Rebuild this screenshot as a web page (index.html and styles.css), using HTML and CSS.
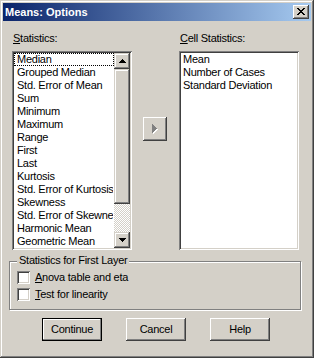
FILE: index.html
```html
<!DOCTYPE html>
<html lang="en">
<head>
    <meta charset="UTF-8">
    <meta name="viewport" content="width=device-width, initial-scale=1.0">
    <title>Means: Options</title>
    <link rel="stylesheet" href="styles.css">
</head>
<body>
    <div class="dialog">
        <div class="titlebar">
            <span class="title">Means: Options</span>
            <div class="close-btn">
                <svg width="8" height="7" viewBox="0 0 8 7" shape-rendering="crispEdges">
                    <path fill="#000" d="M0 0h2v1H0zM6 0h2v1H6zM1 1h2v1H1zM5 1h2v1H5zM2 2h4v1H2zM3 3h2v1H3zM2 4h4v1H2zM1 5h2v1H1zM5 5h2v1H5zM0 6h2v1H0zM6 6h2v1H6z"/>
                </svg>
            </div>
        </div>

        <div class="dialog-body">
            <div class="lists">
                <div class="list-col">
                    <div class="field-label"><u>S</u>tatistics:</div>
                    <div class="listbox">
                        <ul class="items">
                            <li class="focused">Median</li>
                            <li>Grouped Median</li>
                            <li>Std. Error of Mean</li>
                            <li>Sum</li>
                            <li>Minimum</li>
                            <li>Maximum</li>
                            <li>Range</li>
                            <li>First</li>
                            <li>Last</li>
                            <li>Kurtosis</li>
                            <li>Std. Error of Kurtosis</li>
                            <li>Skewness</li>
                            <li>Std. Error of Skewness</li>
                            <li>Harmonic Mean</li>
                            <li>Geometric Mean</li>
                        </ul>
                        <div class="scrollbar">
                            <div class="sb-btn">
                                <svg width="7" height="4" viewBox="0 0 7 4" shape-rendering="crispEdges">
                                    <path fill="#000" d="M3 0h1v1h1v1h1v1h1v1H0V3h1V2h1V1h1z"/>
                                </svg>
                            </div>
                            <div class="sb-thumb"></div>
                            <div class="sb-track"></div>
                            <div class="sb-btn">
                                <svg width="7" height="4" viewBox="0 0 7 4" shape-rendering="crispEdges">
                                    <path fill="#000" d="M0 0h7v1h-1v1h-1v1h-1v1h-1V3H2V2H1V1H0z"/>
                                </svg>
                            </div>
                        </div>
                    </div>
                </div>

                <div class="mover">
                    <div class="arrow-btn">
                        <svg width="6" height="10" viewBox="0 0 6 10" shape-rendering="crispEdges">
                            <path fill="#fff" transform="translate(1 1)" d="M0 0h1v1h1v1h1v1h1v1h1v1h-1v1h-1v1h-1v1h-1v1H0z"/>
                            <path fill="#808080" d="M0 0h1v1h1v1h1v1h1v1h1v1h-1v1h-1v1h-1v1h-1v1H0z"/>
                        </svg>
                    </div>
                </div>

                <div class="list-col">
                    <div class="field-label"><u>C</u>ell Statistics:</div>
                    <div class="listbox">
                        <ul class="items items-plain">
                            <li>Mean</li>
                            <li>Number of Cases</li>
                            <li>Standard Deviation</li>
                        </ul>
                    </div>
                </div>
            </div>

            <div class="group">
                <div class="group-title">Statistics for First Layer</div>
                <div class="check-row">
                    <span class="checkbox"></span>
                    <span><u>A</u>nova table and eta</span>
                </div>
                <div class="check-row">
                    <span class="checkbox"></span>
                    <span><u>T</u>est for linearity</span>
                </div>
            </div>

            <div class="buttons">
                <div class="btn btn-default">Continue</div>
                <div class="btn">Cancel</div>
                <div class="btn">Help</div>
            </div>
        </div>
    </div>
</body>
</html>
```

FILE: styles.css
```css
body {
    margin: 0;
    width: 314px;
    height: 358px;
    overflow: hidden;
    background-color: #d4d0c8;
    font-family: "Liberation Sans", Arial, sans-serif;
    font-size: 11px;
    letter-spacing: -0.25px;
    color: #000;
}

u {
    text-decoration-thickness: 1px;
    text-underline-offset: 1px;
}

/* window frame */
.dialog {
    box-sizing: border-box;
    width: 314px;
    height: 358px;
    padding: 3px;
    display: flex;
    flex-direction: column;
    background-color: #d4d0c8;
    box-shadow: inset -1px -1px #404040, inset 1px 1px #d4d0c8,
                inset -2px -2px #808080, inset 2px 2px #fff;
}

.titlebar {
    height: 18px;
    display: flex;
    align-items: center;
    justify-content: space-between;
    padding: 0 2px;
    background: linear-gradient(to right, #0a246a, #a6caf0);
}

.title {
    color: #fff;
    font-weight: bold;
    letter-spacing: 0;
    line-height: 18px;
}

.close-btn {
    box-sizing: border-box;
    width: 16px;
    height: 14px;
    padding: 3px 0 0 4px;
    background-color: #d4d0c8;
    box-shadow: inset -1px -1px #404040, inset 1px 1px #fff,
                inset -2px -2px #808080, inset 2px 2px #d4d0c8;
}

.close-btn svg,
.sb-btn svg,
.arrow-btn svg {
    display: block;
}

.dialog-body {
    flex: 1;
    padding: 11px 10px 0 6px;
}

/* list boxes */
.lists {
    display: flex;
    margin-left: 3px;
}

.list-col {
    width: 120px;
    display: flex;
    flex-direction: column;
}

.field-label {
    line-height: 13px;
    padding-left: 1px;
    margin-bottom: 6px;
}

.listbox {
    box-sizing: border-box;
    height: 199px;
    padding: 2px;
    display: flex;
    overflow: hidden;
    background-color: #fff;
    box-shadow: inset 1px 1px #808080, inset -1px -1px #fff,
                inset 2px 2px #404040, inset -2px -2px #d4d0c8;
}

.items {
    flex: 1;
    min-width: 0;
    margin: 0;
    padding: 0;
    list-style: none;
    overflow: hidden;
}

.items li {
    line-height: 11px;
    padding-left: 2px;
    border: 1px dotted transparent;
    white-space: nowrap;
    overflow: hidden;
}

.items li.focused {
    border-color: #000;
}

.items-plain li {
    padding-left: 1px;
}

.scrollbar {
    width: 16px;
    display: flex;
    flex-direction: column;
}

.sb-btn,
.sb-thumb {
    box-sizing: border-box;
    background-color: #d4d0c8;
    box-shadow: inset -1px -1px #404040, inset 1px 1px #d4d0c8,
                inset -2px -2px #808080, inset 2px 2px #fff;
}

.sb-btn {
    height: 16px;
    display: flex;
    align-items: center;
    justify-content: center;
}

.sb-thumb {
    height: 135px;
}

.sb-track {
    flex: 1;
    background: repeating-conic-gradient(#d4d0c8 0 25%, #fff 0 50%) 0 0 / 2px 2px;
}

/* move button between the lists */
.mover {
    width: 24px;
    margin: 85px 12px 0 11px;
}

.arrow-btn {
    width: 24px;
    height: 24px;
    display: flex;
    align-items: center;
    justify-content: center;
    background-color: #d4d0c8;
    box-shadow: inset -1px -1px #404040, inset 1px 1px #fff,
                inset -2px -2px #808080, inset 2px 2px #d4d0c8;
}

/* group box */
.group {
    margin-top: 11px;
    padding: 0 0 8px 7px;
    border: 1px solid #808080;
    box-shadow: 1px 1px #fff, inset 1px 1px #fff;
}

.group-title {
    width: fit-content;
    margin-top: -8px;
    padding: 0 2px;
    line-height: 13px;
    background-color: #d4d0c8;
}

.check-row {
    display: flex;
    align-items: center;
    height: 13px;
    margin-top: 4px;
    line-height: 13px;
}

.checkbox {
    box-sizing: border-box;
    width: 13px;
    height: 13px;
    margin-right: 5px;
    background-color: #fff;
    box-shadow: inset 1px 1px #808080, inset -1px -1px #fff,
                inset 2px 2px #404040, inset -2px -2px #d4d0c8;
}

/* dialog buttons */
.buttons {
    display: flex;
    gap: 24px;
    margin-top: 8px;
    padding-left: 33px;
}

.btn {
    box-sizing: border-box;
    width: 60px;
    height: 23px;
    line-height: 23px;
    text-align: center;
    background-color: #d4d0c8;
    box-shadow: inset -1px -1px #404040, inset 1px 1px #fff,
                inset -2px -2px #808080, inset 2px 2px #d4d0c8;
}

.btn-default {
    box-shadow: inset 0 0 0 1px #000, inset -2px -2px #808080,
                inset 2px 2px #fff;
}
```
